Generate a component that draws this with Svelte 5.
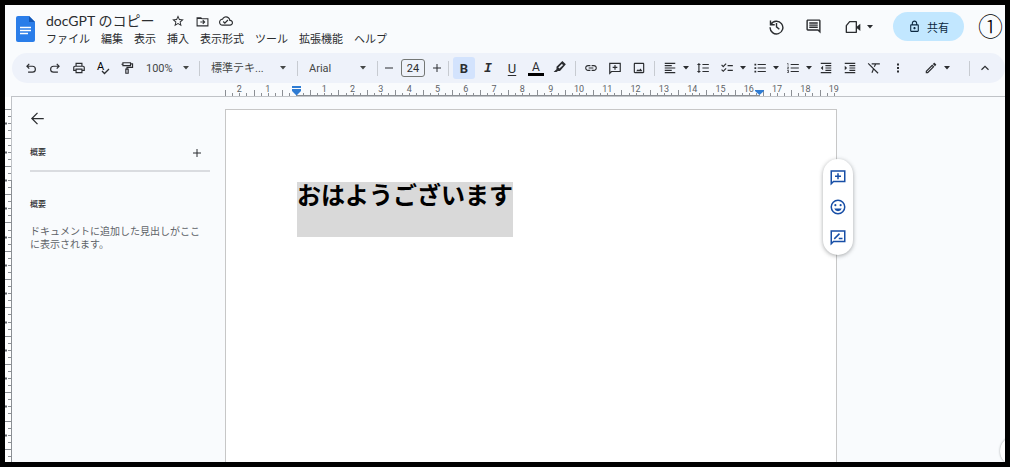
<script>
  // stroke: true means the path is drawn as a line instead of filled
  const icons = {
    undo: { stroke: true, d: 'M9 5 5 9l4 4M5 9h9.5a5 5 0 0 1 0 10H7' },
    redo: { stroke: true, d: 'M15 5l4 4-4 4M19 9H9.5a5 5 0 0 0 0 10H17' },
    print: { d: 'M19 8h-1V3H6v5H5c-1.66 0-3 1.34-3 3v6h4v4h12v-4h4v-6c0-1.66-1.34-3-3-3zM8 5h8v3H8V5zm8 14H8v-4h8v4zm2-4v-2H6v2H4v-4c0-.55.45-1 1-1h14c.55 0 1 .45 1 1v4h-2z' },
    paint: { stroke: true, d: 'M5 3h13v5H5zM18 5h3.5v6H12v3M10 14h4v7h-4zM5 5.5H2.5' },
    link: { d: 'M3.9 12c0-1.71 1.39-3.1 3.1-3.1h4V7H7c-2.76 0-5 2.24-5 5s2.24 5 5 5h4v-1.9H7c-1.71 0-3.1-1.39-3.1-3.1zM8 13h8v-2H8v2zm9-6h-4v1.9h4c1.71 0 3.1 1.39 3.1 3.1s-1.39 3.1-3.1 3.1h-4V17h4c2.76 0 5-2.24 5-5s-2.24-5-5-5z' },
    addComment: { stroke: true, d: 'M3 21V4h18v14H6zM12 7v8M8 11h8' },
    image: { d: 'M19 5v14H5V5h14m0-2H5c-1.1 0-2 .9-2 2v14c0 1.1.9 2 2 2h14c1.1 0 2-.9 2-2V5c0-1.1-.9-2-2-2zM14.5 13l-2.5 3-1.8-2L7 17.5h11z' },
    alignLeft: { d: 'M15 15H3v2h12v-2zm0-8H3v2h12V7zM3 13h18v-2H3v2zm0 8h18v-2H3v2zM3 3v2h18V3H3z' },
    spacing: { d: 'M6 7h2.5L5 3.5 1.5 7H4v10H1.5L5 20.5 8.5 17H6V7zm5-2v2h11V5H11zm0 14h11v-2H11v2zm0-6h11v-2H11v2z' },
    checklist: { d: 'M22 7h-9v2h9V7zm0 8h-9v2h9v-2zM5.54 11L2 7.46l1.41-1.41 2.12 2.12 4.24-4.24 1.41 1.41L5.54 11zm0 8L2 15.46l1.41-1.41 2.12 2.12 4.24-4.24 1.41 1.41L5.54 19z' },
    bullets: { d: 'M2.5 4.5h3v3h-3zM2.5 10.5h3v3h-3zM2.5 16.5h3v3h-3zM8 19h14v-2H8v2zm0-6h14v-2H8v2zm0-8v2h14V5H8z' },
    numbers: { d: 'M2 17h2v.5H3v1h1v.5H2v1h3v-4H2v1zm1-9h1V4H2v1h1v3zm-1 3h1.8L2 13.1v.9h3v-1H3.2L5 10.9V10H2v1zm6-6v2h14V5H8zm0 14h14v-2H8v2zm0-6h14v-2H8v2z' },
    outdent: { d: 'M11 17h10v-2H11v2zm-8-5l4 4V8l-4 4zm0 9h18v-2H3v2zM3 3v2h18V3H3zm8 6h10V7H11v2zm0 4h10v-2H11v2z' },
    indent: { d: 'M3 21h18v-2H3v2zM3 8v8l4-4-4-4zm8 9h10v-2H11v2zM3 3v2h18V3H3zm8 6h10V7H11v2zm0 4h10v-2H11v2z' },
    clear: { stroke: true, d: 'M8 5h14M15 5l-2.5 5M11 14l-2.5 6M2 4l17 17' },
    more: { d: 'M10 3h4v4h-4zM10 10h4v4h-4zM10 17h4v4h-4z' },
    pencil: { d: 'M14.06 9.02l.92.92L5.92 19H5v-.92l9.06-9.06M17.66 3c-.25 0-.51.1-.7.29l-1.83 1.83 3.75 3.75 1.83-1.83c.39-.39.39-1.02 0-1.41l-2.34-2.34c-.2-.2-.45-.29-.71-.29zm-3.6 3.19L3 17.25V21h3.75L17.81 9.94l-3.75-3.75z' },
    marker: { d: 'M16 0l6 5.5L12 17H8.5L6 19H1l5-5v-4zM15 5l-6 6 2 2 6.500-6z' },
    up: { stroke: true, d: 'M6 15l6-6 6 6' },
    plus: { stroke: true, d: 'M12 4v16M4 12h16' },
    minus: { stroke: true, d: 'M4 12h16' },
    back: { stroke: true, d: 'M22 12H4M12 3l-9 9 9 9' },
    star: { d: 'M22 9.24l-7.19-.62L12 2 9.19 8.63 2 9.24l5.46 4.73L5.82 21 12 17.27 18.18 21l-1.63-7.03L22 9.24zM12 15.4l-3.76 2.27 1-4.28-3.32-2.88 4.38-.38L12 6.1l1.71 4.04 4.38.38-3.32 2.88 1 4.28L12 15.4z' },
    move: { stroke: true, d: 'M2 20V5h7l2 2h11v13zM2 6.5h9M8 13h8M12.5 9.5L16 13l-3.5 3.5' },
    cloud: { d: 'M19.35 10.04C18.67 6.59 15.64 4 12 4 9.11 4 6.6 5.64 5.35 8.04 2.34 8.36 0 10.91 0 14c0 3.31 2.69 6 6 6h13c2.76 0 5-2.24 5-5 0-2.64-2.05-4.78-4.65-4.96zM19 18H6c-2.21 0-4-1.79-4-4 0-2.05 1.53-3.76 3.56-3.97l1.07-.11.5-.95C8.08 7.14 9.94 6 12 6c2.62 0 4.88 1.86 5.39 4.43l.3 1.5 1.53.11c1.56.1 2.78 1.41 2.78 2.96 0 1.65-1.35 3-3 3zm-9-3.82l-2.09-2.09L6.5 13.5 10 17l6.01-6.01-1.41-1.41z' },
    history: { stroke: true, d: 'M3.5 3.5v6h6M4.2 9A9 9 0 1 1 3 13M12 7v5.5l4 3.5' },
    comments: { d: 'M22 4c0-1.1-.9-2-2-2H4c-1.1 0-2 .9-2 2v12c0 1.1.9 2 2 2h14l4 4zM20 4v13.17L18.83 16H4V4h16zM6 12h12v2H6zm0-3h12v2H6zm0-3h12v2H6z' },
    lock: { d: 'M18 8h-1V6c0-2.76-2.24-5-5-5S7 3.24 7 6v2H6c-1.1 0-2 .9-2 2v10c0 1.1.9 2 2 2h12c1.1 0 2-.9 2-2V10c0-1.1-.9-2-2-2zM9 6c0-1.66 1.34-3 3-3s3 1.34 3 3v2H9V6zm9 14H6V10h12v10zm-6-3c1.1 0 2-.9 2-2s-.9-2-2-2-2 .9-2 2 .9 2 2 2z' },
    suggest: { stroke: true, d: 'M3 21V4h18v14H6zM7 14.5l7-7M13 14h5' }
  };

  const menus = ['ファイル', '編集', '表示', '挿入', '表示形式', 'ツール', '拡張機能', 'ヘルプ'];

  const CM = 28.3;
  const origin = 71;

  // quarter-centimetre ticks, the half ones are taller
  function makeTicks(from, to) {
    const ticks = [];
    for (let q = from * 4; q <= to * 4; q++) {
      ticks.push({ at: Math.round(origin + (q / 4) * CM) + 0.5, half: Math.abs(q) % 4 === 2, whole: q % 4 === 0 });
    }
    return ticks;
  }

  const ticks = makeTicks(-2.5, 19);
  const sideTicks = makeTicks(-2.5, 30);
  const labels = [-2, -1, ...Array.from({ length: 19 }, (_, i) => i + 1)];

  let bold = true;
  let fontSize = '24';
</script>

{#snippet icon(name, size = 14)}
  <svg class="icon" class:line={icons[name].stroke} width={size} height={size} viewBox="0 0 24 24" aria-hidden="true">
    <path d={icons[name].d} />
  </svg>
{/snippet}

{#snippet caret()}
  <svg class="caret" width="6" height="4" viewBox="0 0 6 4" aria-hidden="true"><path d="M0 0h6L3 3.5z" /></svg>
{/snippet}

<div class="app">
  <header>
    <a class="logo" href="#home" aria-label="ドキュメント ホーム">
      <svg width="19" height="26" viewBox="0 0 19 26" aria-hidden="true">
        <path d="M2 0h11l6 6v18a2 2 0 0 1-2 2H2a2 2 0 0 1-2-2V2a2 2 0 0 1 2-2z" fill="#2a7de9" />
        <path d="M13 0l6 6h-6z" fill="#1357b5" />
        <path d="M4 11.5h11M4 14.5h11M4 17.5h8" stroke="#fff" stroke-width="1.5" />
      </svg>
    </a>
    <div class="heading">
      <div class="title-row">
        <h1>docGPT のコピー</h1>
        <button aria-label="スター">{@render icon('star', 14)}</button>
        <button aria-label="移動">{@render icon('move', 13)}</button>
        <button aria-label="保存状況">{@render icon('cloud', 14)}</button>
      </div>
      <nav>
        {#each menus as menu}
          <button>{menu}</button>
        {/each}
      </nav>
    </div>
    <div class="actions">
      <button aria-label="変更履歴">{@render icon('history', 17)}</button>
      <button aria-label="コメント">{@render icon('comments', 17)}</button>
      <button class="meet" aria-label="通話">
        <svg width="16" height="16" viewBox="0 0 24 24" aria-hidden="true">
          <path d="M2 10l5-6h10v16H2z" fill="none" stroke="currentColor" stroke-width="2" stroke-linejoin="round" />
          <path d="M17 12l6-5v11l-6-5z" fill="currentColor" />
        </svg>
        {@render caret()}
      </button>
      <button class="share">{@render icon('lock', 13)}共有</button>
      <span class="step">①</span>
    </div>
  </header>

  <div class="toolbar" role="toolbar" aria-label="書式">
    <button class="tool" aria-label="元に戻す">{@render icon('undo')}</button>
    <button class="tool" aria-label="やり直し">{@render icon('redo')}</button>
    <button class="tool" aria-label="印刷">{@render icon('print')}</button>
    <button class="tool" aria-label="スペルチェック">
      <svg width="14" height="14" viewBox="0 0 14 14" aria-hidden="true">
        <text x="1" y="9" font-size="11">A</text>
        <path d="M6 10l2.5 2.5L13 8" fill="none" stroke="currentColor" stroke-width="1.3" />
      </svg>
    </button>
    <button class="tool" aria-label="書式を貼り付け">{@render icon('paint')}</button>
    <div class="drop zoom">
      <select aria-label="倍率"><option>100%</option></select>
      {@render caret()}
    </div>
    <span class="sep"></span>
    <div class="drop style">
      <select aria-label="スタイル"><option>標準テキ...</option></select>
      {@render caret()}
    </div>
    <span class="sep"></span>
    <div class="drop font">
      <select aria-label="フォント"><option>Arial</option></select>
      {@render caret()}
    </div>
    <span class="sep"></span>
    <button class="step-btn" aria-label="縮小">{@render icon('minus', 12)}</button>
    <input class="size" aria-label="フォント サイズ" bind:value={fontSize} />
    <button class="step-btn" aria-label="拡大">{@render icon('plus', 12)}</button>
    <span class="sep"></span>
    <button class="tool b" class:active={bold} aria-label="太字" on:click={() => (bold = !bold)}>B</button>
    <button class="tool i" aria-label="斜体">I</button>
    <button class="tool u" aria-label="下線">U</button>
    <button class="tool color" aria-label="テキストの色"><span>A</span></button>
    <button class="tool" aria-label="ハイライト">{@render icon('marker', 14)}</button>
    <span class="sep"></span>
    <button class="tool" aria-label="リンク">{@render icon('link')}</button>
    <button class="tool" aria-label="コメントを追加">{@render icon('addComment')}</button>
    <button class="tool" aria-label="画像">{@render icon('image')}</button>
    <span class="sep"></span>
    <button class="combo" aria-label="配置">{@render icon('alignLeft')}{@render caret()}</button>
    <button class="tool" aria-label="行間隔">{@render icon('spacing')}</button>
    <button class="combo" aria-label="チェックリスト">{@render icon('checklist')}{@render caret()}</button>
    <button class="combo" aria-label="箇条書き">{@render icon('bullets')}{@render caret()}</button>
    <button class="combo" aria-label="番号付きリスト">{@render icon('numbers')}{@render caret()}</button>
    <button class="tool" aria-label="インデント減">{@render icon('outdent')}</button>
    <button class="tool" aria-label="インデント増">{@render icon('indent')}</button>
    <button class="tool" aria-label="書式をクリア">{@render icon('clear')}</button>
    <button class="tool" aria-label="その他">{@render icon('more', 12)}</button>
    <div class="modes">
      <button class="combo" aria-label="編集モード">{@render icon('pencil')}{@render caret()}</button>
      <span class="sep"></span>
      <button class="tool" aria-label="メニューを非表示">{@render icon('up')}</button>
    </div>
  </div>

  <div class="ruler">
    <svg width="620" height="14" aria-hidden="true">
      {#each ticks as tick}
        <line x1={tick.at} x2={tick.at} y1={tick.half ? 7 : 10} y2="13" />
      {/each}
      <line x1="72" x2="535" y1="12.5" y2="12.5" />
      {#each labels as n}
        <text x={origin + n * CM} y="9" text-anchor="middle">{Math.abs(n)}</text>
      {/each}
      <path d="M67 3h9v2h-9zM67 6h9v2l-4.5 4.5L67 8z" fill="#2f7cd3" />
      <path d="M530 7h9v1l-4.5 4L530 8z" fill="#2f7cd3" />
    </svg>
  </div>

  <main>
    <div class="side-ruler">
      <svg width="7" height="100%" aria-hidden="true">
        {#each sideTicks as tick}
          <line x1={tick.half ? 0 : 3} x2="6" y1={tick.at + 12} y2={tick.at + 12} />
          {#if tick.whole}
            <line class="mark" x1="0" x2="2" y1={tick.at + 12} y2={tick.at + 12} />
          {/if}
        {/each}
        <line x1="6.5" x2="6.5" y1="83" y2="100%" />
      </svg>
    </div>

    <aside>
      <button class="back" aria-label="閉じる">{@render icon('back', 15)}</button>
      <div class="summary">
        <h2>概要</h2>
        <button aria-label="概要を追加">{@render icon('plus', 12)}</button>
      </div>
      <h2>概要</h2>
      <p>ドキュメントに追加した見出しがここに表示されます。</p>
    </aside>

    <div class="canvas">
      <article>
        <p><mark class:bold>おはようございます</mark></p>
      </article>
      <div class="float">
        <button aria-label="コメントを追加">{@render icon('addComment', 18)}</button>
        <button aria-label="リアクション">
          <svg width="18" height="18" viewBox="0 0 24 24" aria-hidden="true">
            <circle cx="12" cy="12" r="9" fill="none" stroke="currentColor" stroke-width="2" />
            <circle cx="8.5" cy="9.5" r="1.4" fill="currentColor" />
            <circle cx="15.5" cy="9.5" r="1.4" fill="currentColor" />
            <path d="M7 14h10a5.3 5.3 0 0 1-10 0z" fill="currentColor" />
          </svg>
        </button>
        <button aria-label="編集を提案">{@render icon('suggest', 18)}</button>
      </div>
    </div>
    <button class="explore" aria-label="データ探索"></button>
  </main>
</div>

<style>
  :global(body) {
    background: #000;
  }

  .app {
    box-sizing: border-box;
    height: 100vh;
    display: flex;
    flex-direction: column;
    border: 5px solid #000;
    overflow: hidden;
    background: #f9fbfd;
    color: #2b2d30;
    font-family: Roboto, "Noto Sans CJK JP", sans-serif;
    font-size: 11px;
  }

  button,
  select,
  input {
    font: inherit;
    color: inherit;
    background: none;
    border: 0;
    padding: 0;
    margin: 0;
  }

  button {
    display: flex;
    align-items: center;
    justify-content: center;
    flex-shrink: 0;
    white-space: nowrap;
    cursor: pointer;
  }

  svg {
    display: block;
    flex-shrink: 0;
  }

  h1,
  h2,
  p {
    margin: 0;
    font-weight: 400;
  }

  .icon {
    fill: currentColor;
  }

  .icon.line {
    fill: none;
    stroke: currentColor;
    stroke-width: 2;
  }

  .caret {
    fill: currentColor;
  }

  header {
    display: flex;
    flex-shrink: 0;
    height: 48px;
    padding-left: 11px;
  }

  .logo {
    padding-top: 11px;
  }

  .heading {
    padding: 6px 0 0 11px;
  }

  .title-row {
    display: flex;
    align-items: center;
    height: 20px;
  }

  .title-row h1 {
    margin-right: 12px;
    font-family: Lato, "Noto Sans CJK JP", sans-serif;
    font-size: 14px;
    line-height: 20px;
  }

  .title-row button {
    width: 24px;
    height: 20px;
  }

  nav {
    display: flex;
    gap: 11px;
  }

  nav button {
    line-height: 18px;
  }

  .actions {
    display: flex;
    align-items: center;
    height: 43px;
    margin-left: auto;
  }

  .actions button {
    width: 37px;
    height: 29px;
  }

  .actions .meet {
    width: 54px;
    gap: 6px;
  }

  .actions .share {
    width: 71px;
    margin: 0 14px 0 7px;
    gap: 6px;
    border-radius: 15px;
    background: #c2e7ff;
    color: #0b2740;
  }

  .step {
    width: 27px;
    padding-bottom: 4px;
    font-family: "Noto Sans CJK JP", sans-serif;
    font-size: 25px;
    font-weight: 300;
    line-height: 26px;
    color: #000;
  }

  .toolbar {
    display: flex;
    align-items: center;
    flex-shrink: 0;
    height: 30px;
    margin-left: 7px;
    padding: 0 8px 0 7px;
    border-radius: 15px;
    background: #eef2fa;
  }

  .tool {
    width: 22px;
    height: 22px;
    margin: 0 1px;
    border-radius: 3px;
  }

  .combo {
    width: 33px;
    height: 22px;
    padding-left: 3px;
    gap: 6px;
  }

  .sep {
    flex-shrink: 0;
    width: 1px;
    height: 15px;
    margin: 0 3px;
    background: #c7cbd1;
  }

  .drop {
    display: flex;
    align-items: center;
    flex-shrink: 0;
    padding: 0 7px;
    box-sizing: border-box;
    color: #444746;
  }

  .drop select {
    flex: 1;
    min-width: 0;
    height: 22px;
    appearance: none;
  }

  .zoom {
    width: 57px;
  }

  .style {
    width: 91px;
    padding: 0 8px;
  }

  .font {
    width: 73px;
    padding: 0 8px;
  }

  .step-btn {
    width: 16px;
    height: 22px;
  }

  .size {
    box-sizing: border-box;
    width: 24px;
    height: 18px;
    margin: 0 4px;
    border: 1px solid #747775;
    border-radius: 3px;
    text-align: center;
  }

  .b,
  .i,
  .u {
    font-size: 13px;
  }

  .b {
    font-weight: 700;
  }

  .i {
    font-family: "Liberation Mono", monospace;
    font-style: italic;
    font-weight: 700;
  }

  .u {
    text-decoration: underline;
    text-underline-offset: 2px;
  }

  .active {
    background: #d3e3fd;
  }

  .color span {
    width: 16px;
    border-bottom: 3px solid #000;
    font-size: 12px;
    line-height: 12px;
  }

  .modes {
    display: flex;
    align-items: center;
    margin-left: auto;
  }

  .modes .combo {
    margin-right: 14px;
  }

  .ruler {
    flex-shrink: 0;
    margin-left: 6px;
    padding-left: 214px;
    border-bottom: 1px solid #c0c3c7;
  }

  line {
    stroke: #8b8f94;
  }

  .ruler svg {
    margin-bottom: -1px;
  }

  .ruler text {
    font-size: 9px;
    fill: #5f6368;
  }

  main {
    position: relative;
    display: flex;
    flex: 1;
    min-height: 0;
    overflow: hidden;
  }

  .side-ruler {
    flex-shrink: 0;
    width: 6px;
    border-right: 1px solid #c0c3c7;
    background: #fff;
  }

  .mark {
    stroke: #5f6368;
    stroke-width: 2;
  }

  aside {
    flex-shrink: 0;
    box-sizing: border-box;
    width: 213px;
    padding: 13px 15px 0 18px;
  }

  .back {
    width: 15px;
    height: 16px;
  }

  .summary {
    display: flex;
    align-items: center;
    justify-content: space-between;
    height: 34px;
    margin: 10px 0 25px;
    padding-right: 7px;
    border-bottom: 2px solid #dadce0;
  }

  h2 {
    font-size: 8px;
    line-height: 16px;
    font-weight: 500;
  }

  aside p {
    margin-top: 12px;
    padding-right: 8px;
    font-size: 10px;
    line-height: 13px;
    color: #5f6368;
  }

  .canvas {
    position: relative;
    flex-shrink: 0;
    width: 612px;
    padding-top: 12px;
  }

  article {
    box-sizing: border-box;
    height: 100%;
    padding: 72px 71px;
    border: 1px solid #c7c7c7;
    border-bottom: 0;
    background: #fff;
  }

  mark {
    display: inline-block;
    padding-bottom: 31px;
    background: #d9d9d9;
    color: #000;
    font-family: "Noto Sans CJK JP", sans-serif;
    font-size: 24px;
    line-height: 24px;
  }

  .bold {
    font-weight: 700;
  }

  /* sits over the right edge of the page */
  .float {
    position: absolute;
    top: 62px;
    right: -16px;
    box-sizing: border-box;
    width: 30px;
    padding: 3px 0;
    border-radius: 15px;
    background: #fff;
    box-shadow: 0 1px 4px rgba(60, 64, 67, 0.45);
    color: #174ea6;
  }

  .float button {
    width: 30px;
    height: 30px;
  }

  .explore {
    position: absolute;
    right: -25px;
    bottom: -4px;
    width: 30px;
    height: 30px;
    border-radius: 50%;
    background: #fff;
    box-shadow: 0 0 2px rgba(60, 64, 67, 0.5);
  }
</style>
